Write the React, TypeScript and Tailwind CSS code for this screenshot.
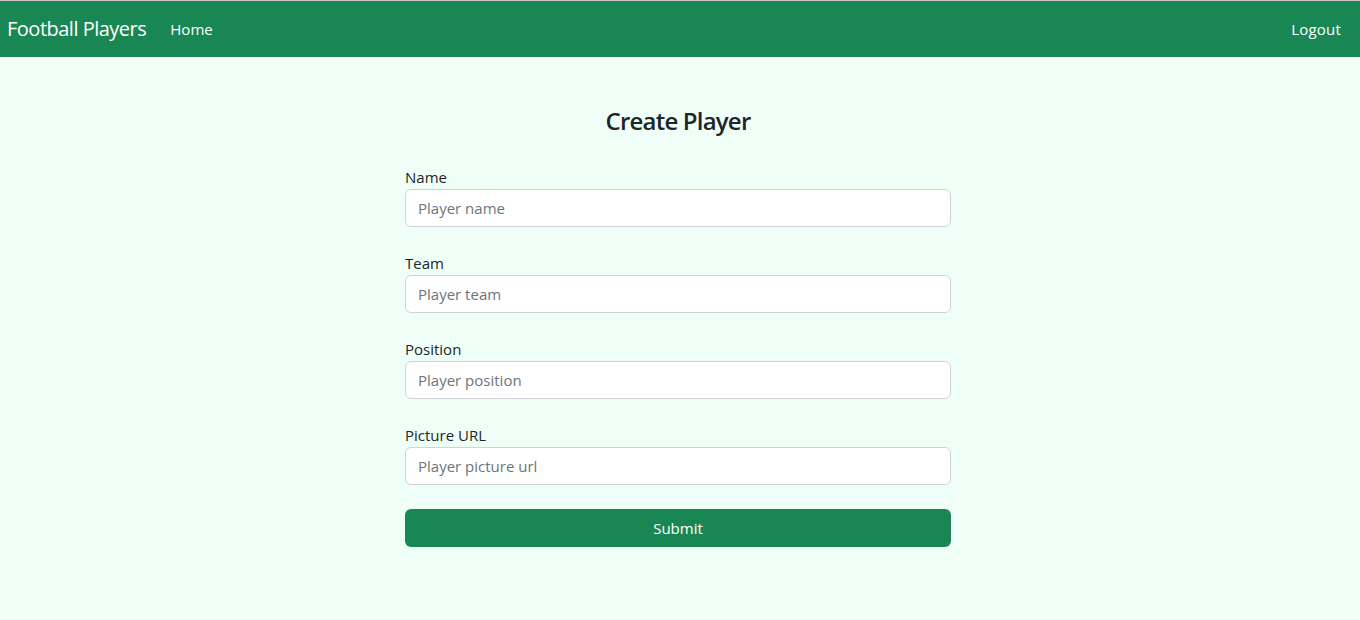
import React, { useState } from 'react';

interface Field {
  name: string;
  label: string;
  placeholder: string;
}

const fields: Field[] = [
  { name: 'name', label: 'Name', placeholder: 'Player name' },
  { name: 'team', label: 'Team', placeholder: 'Player team' },
  { name: 'position', label: 'Position', placeholder: 'Player position' },
  { name: 'picture', label: 'Picture URL', placeholder: 'Player picture url' },
];

const App: React.FC = () => {
  const [values, setValues] = useState<Record<string, string>>({});

  return (
    <div className="min-h-[620px] bg-[#effff7] font-['Open_Sans',_'Noto_Sans',_sans-serif]">
      {/* Navbar */}
      <nav className="h-[57px] border-t border-[#c8c8c8] bg-[#198754] flex items-center justify-between pl-[7px] pr-[19px] text-white">
        <div className="flex items-center">
          <span className="text-[20px] leading-none tracking-[-0.5px]">Football Players</span>
          <a className="ml-[24px] text-[15px]">Home</a>
        </div>
        <a className="text-[15px] tracking-[0.2px]">Logout</a>
      </nav>

      {/* Form */}
      <div className="w-[546px] mx-auto -translate-x-[2px]">
        <h2 className="mt-[49px] text-center text-[24px] font-semibold text-[#212529] leading-[29px] tracking-[-0.8px]">
          Create Player
        </h2>
        <form className="mt-[30px]" onSubmit={(e) => e.preventDefault()}>
          {fields.map((f) => (
            <div key={f.name} className="mb-[24px]">
              <label className="block text-[15px] leading-[24px] text-[#212529]">{f.label}</label>
              <input
                className="block w-full h-[38px] px-[12px] rounded-[6px] border border-[#ced4da] bg-white text-[15px] text-[#212529] placeholder:text-[#6c757d] outline-none"
                placeholder={f.placeholder}
                value={values[f.name] || ''}
                onChange={(e) => setValues({ ...values, [f.name]: e.target.value })}
              />
            </div>
          ))}
          <button
            type="submit"
            className="w-full h-[38px] rounded-[6px] bg-[#198754] text-white text-[15px]"
          >
            Submit
          </button>
        </form>
      </div>
    </div>
  );
};

export default App;
